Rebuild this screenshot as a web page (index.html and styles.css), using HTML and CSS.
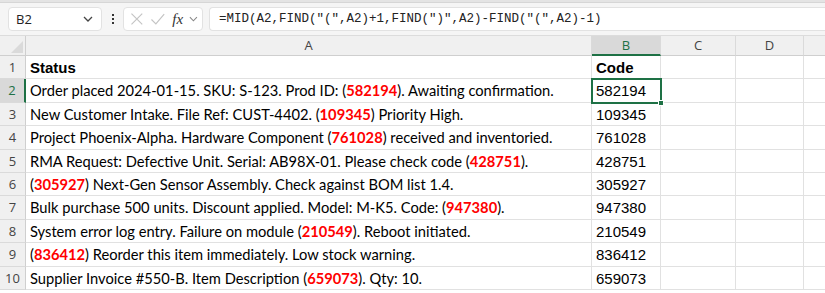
FILE: index.html
```html
<!DOCTYPE html>
<html lang="en">
<head>
  <meta charset="UTF-8">
  <title>Sheet</title>
  <link rel="stylesheet" href="styles.css">
</head>
<body>
  <!-- FORMULA BAR -->
  <div class="topline"></div>
  <div class="fbar">
    <div class="namebox">
      <span>B2</span>
      <svg class="chev" width="10" height="6" viewBox="0 0 10 6"><path d="M1 1 L5 5 L9 1" fill="none" stroke="#444" stroke-width="1.3"/></svg>
    </div>
    <div class="dots"><i></i><i></i><i></i></div>
    <div class="fxbox">
      <svg width="14" height="14" viewBox="0 0 14 14"><path d="M1.5 1.5 L12.5 12.5 M12.5 1.5 L1.5 12.5" stroke="#c4c4c4" stroke-width="1.2"/></svg>
      <svg width="16" height="14" viewBox="0 0 16 14"><path d="M1.5 7.5 L6 12 L14.5 2" fill="none" stroke="#c4c4c4" stroke-width="1.2"/></svg>
      <span class="fx">fx</span>
      <svg class="chev" width="9" height="6" viewBox="0 0 10 6"><path d="M1 1 L5 5 L9 1" fill="none" stroke="#888" stroke-width="1.2"/></svg>
    </div>
    <div class="formula">=MID(A2,FIND("(",A2)+1,FIND(")",A2)-FIND("(",A2)-1)</div>
  </div>

  <!-- GRID -->
  <div class="sheet">
    <div class="corner"><div class="tri"></div></div>
    <div class="colh">A</div>
    <div class="colh sel">B</div>
    <div class="colh">C</div>
    <div class="colh">D</div>
    <div class="colh last"></div>

    <div class="rowh">1</div>
    <div class="cell b">Status</div>
    <div class="cell num b">Code</div>
    <div class="cell"></div><div class="cell"></div><div class="cell last"></div>

    <div class="rowh sel">2</div>
    <div class="cell">Order placed 2024-01-15. SKU: S-123. Prod ID: (<em>582194</em>). Awaiting confirmation.</div>
    <div class="cell num active">582194<span class="handle"></span></div>
    <div class="cell"></div><div class="cell"></div><div class="cell last"></div>

    <div class="rowh">3</div>
    <div class="cell">New Customer Intake. File Ref: CUST-4402. (<em>109345</em>) Priority High.</div>
    <div class="cell num">109345</div>
    <div class="cell"></div><div class="cell"></div><div class="cell last"></div>

    <div class="rowh">4</div>
    <div class="cell">Project Phoenix-Alpha. Hardware Component (<em>761028</em>) received and inventoried.</div>
    <div class="cell num">761028</div>
    <div class="cell"></div><div class="cell"></div><div class="cell last"></div>

    <div class="rowh">5</div>
    <div class="cell">RMA Request: Defective Unit. Serial: AB98X-01. Please check code (<em>428751</em>).</div>
    <div class="cell num">428751</div>
    <div class="cell"></div><div class="cell"></div><div class="cell last"></div>

    <div class="rowh">6</div>
    <div class="cell">(<em>305927</em>) Next-Gen Sensor Assembly. Check against BOM list 1.4.</div>
    <div class="cell num">305927</div>
    <div class="cell"></div><div class="cell"></div><div class="cell last"></div>

    <div class="rowh">7</div>
    <div class="cell">Bulk purchase 500 units. Discount applied. Model: M-K5. Code: (<em>947380</em>).</div>
    <div class="cell num">947380</div>
    <div class="cell"></div><div class="cell"></div><div class="cell last"></div>

    <div class="rowh">8</div>
    <div class="cell">System error log entry. Failure on module (<em>210549</em>). Reboot initiated.</div>
    <div class="cell num">210549</div>
    <div class="cell"></div><div class="cell"></div><div class="cell last"></div>

    <div class="rowh">9</div>
    <div class="cell">(<em>836412</em>) Reorder this item immediately. Low stock warning.</div>
    <div class="cell num">836412</div>
    <div class="cell"></div><div class="cell"></div><div class="cell last"></div>

    <div class="rowh">10</div>
    <div class="cell">Supplier Invoice #550-B. Item Description (<em>659073</em>). Qty: 10.</div>
    <div class="cell num">659073</div>
    <div class="cell"></div><div class="cell"></div><div class="cell last"></div>
  </div>
</body>
</html>
```

FILE: styles.css
```css
/* BASE */
* {
  margin: 0;
  padding: 0;
  box-sizing: border-box;
}
body {
  width: 825px;
  height: 293px;
  overflow: hidden;
  background: #fff;
  font-family: "Liberation Sans", Arial, sans-serif;
  color: #000;
}
/* ----- FORMULA BAR ----- */
.topline {
  height: 3px;
  background: #e4e4e4;
  border-bottom: 1px solid #d6d6d6;
}
.fbar {
  height: 33px;
  background: #f5f5f5;
  display: flex;
  align-items: center;
  padding: 0 0 0 8px;
  border-bottom: 1px solid #dcdcdc;
}
.namebox {
  width: 94px;
  height: 24px;
  background: #fff;
  border: 1px solid #e2e2e2;
  border-radius: 4px;
  display: flex;
  align-items: center;
  justify-content: space-between;
  padding: 0 8px 0 7px;
  font-family: "Open Sans", sans-serif;
  font-size: 13px;
  color: #222;
}
.dots {
  width: 21px;
  display: flex;
  flex-direction: column;
  align-items: center;
  gap: 2px;
}
.dots i {
  width: 2px;
  height: 2px;
  background: #333;
}
.fxbox {
  width: 80px;
  height: 24px;
  background: #fff;
  border: 1px solid #e2e2e2;
  border-radius: 4px;
  display: flex;
  align-items: center;
  padding: 0 4px 0 6px;
  gap: 6px;
}
.fx {
  font-family: "Liberation Serif", serif;
  font-style: italic;
  font-size: 15px;
  color: #333;
  margin-left: 1px;
}
.formula {
  flex: 1;
  margin-left: 6px;
  height: 24px;
  background: #fff;
  border: 1px solid #e2e2e2;
  border-right: none;
  border-radius: 4px 0 0 4px;
  padding: 0 0 0 9px;
  line-height: 23px;
  font-family: "Liberation Mono", monospace;
  font-size: 12.5px;
  color: #222;
  white-space: nowrap;
}
/* ----- GRID ----- */
.sheet {
  display: grid;
  grid-template-columns: 26px 566px 69px 75px 68px 21px;
  grid-template-rows: 20px repeat(10, 23.4px);
}
.corner {
  background: #f0f0f0;
  border-right: 1px solid #cfcfcf;
  border-bottom: 1px solid #cfcfcf;
  position: relative;
}
.corner .tri {
  position: absolute;
  right: 2px;
  bottom: 2px;
  width: 0;
  height: 0;
  border-left: 12px solid transparent;
  border-bottom: 12px solid #dadada;
}
.colh {
  background: #f0f0f0;
  border-right: 1px solid #dadada;
  border-bottom: 1px solid #cfcfcf;
  text-align: center;
  font-family: "Open Sans", sans-serif;
  font-size: 13px;
  line-height: 19px;
  color: #444;
}
.colh.sel {
  background: #d9d9d9;
  color: #1e7145;
  border-bottom: 2px solid #1e7145;
}
.colh.last { border-right: none; }
.rowh {
  background: #f0f0f0;
  border-right: 1px solid #cfcfcf;
  border-bottom: 1px solid #dadada;
  text-align: center;
  font-family: "Open Sans", sans-serif;
  font-size: 13px;
  line-height: 22px;
  color: #444;
}
.rowh.sel {
  background: #d9d9d9;
  color: #1e7145;
  border-right: 2px solid #1e7145;
}
.cell {
  border-right: 1px solid #e1e1e1;
  border-bottom: 1px solid #e1e1e1;
  padding: 0 0 0 4px;
  font-family: "Lato", sans-serif;
  font-size: 14.7px;
  line-height: 23px;
  white-space: nowrap;
  overflow: hidden;
}
.cell.last { border-right: none; }
.cell.num {
  font-family: "Liberation Sans", Arial, sans-serif;
  font-size: 15px;
}
.cell.b {
  font-family: "Liberation Sans", Arial, sans-serif;
  font-weight: bold;
  font-size: 15px;
}
.cell em {
  font-style: normal;
  font-weight: bold;
  color: #ff0000;
}
.cell.active {
  position: relative;
  overflow: visible;
  outline: 2px solid #1e7145;
  outline-offset: -1px;
}
.handle {
  position: absolute;
  right: -4px;
  bottom: -4px;
  width: 6px;
  height: 6px;
  background: #1e7145;
  border: 1px solid #fff;
}
```
